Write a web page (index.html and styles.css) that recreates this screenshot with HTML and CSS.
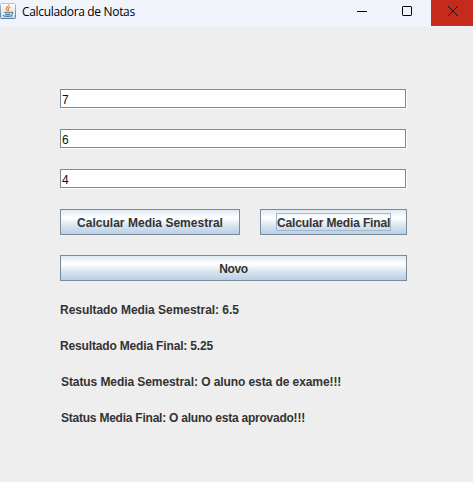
FILE: index.html
```html
<!DOCTYPE html>
<html lang="pt">
<head>
<meta charset="utf-8">
<title>Calculadora de Notas</title>
<link rel="stylesheet" href="styles.css">
</head>
<body>
<header class="titlebar">
  <svg class="app-icon" width="16" height="16" viewBox="0 0 16 16">
    <defs>
      <linearGradient id="tile" x1="0" y1="0" x2="0" y2="1">
        <stop offset="0" stop-color="#fdfdfd"/><stop offset="1" stop-color="#cfdbe4"/>
      </linearGradient>
      <linearGradient id="edge" x1="0" y1="0" x2="0" y2="1">
        <stop offset="0" stop-color="#b3c1cc"/><stop offset="1" stop-color="#567d9c"/>
      </linearGradient>
    </defs>
    <rect x=".5" y=".5" width="15" height="15" rx="1" fill="url(#tile)" stroke="url(#edge)"/>
    <path d="M8.8 1.5C9.6 3.5 5.6 4 6.2 6c.2.9 1.2 1.5 1.4 2.4M10.6 4C8.7 4.8 7.6 5.6 8.4 6.6c.5.6.4 1.2-.1 1.8" fill="none" stroke="#ee8432" stroke-width="1.2"/>
    <path d="M4.5 9.2c1.5.7 5 .6 6.2 0M5.2 11c1.4.6 3.8.6 5 0M3 12.6c2 1.1 7.5 1 9.5-.1M11 9.2c2.4-.6 2.2 1.5.1 2" fill="none" stroke="#4b7fa8" stroke-width="1.1"/>
  </svg>
  <h1 class="title">Calculadora de Notas</h1>
  <div class="controls">
    <svg class="minimize" width="10" height="10" viewBox="0 0 10 10"><path d="M0 5.5h10" stroke="#000"/></svg>
    <svg class="maximize" width="10" height="10" viewBox="0 0 10 10"><rect x=".5" y=".5" width="9" height="9" rx=".6" fill="none" stroke="#000"/></svg>
    <span class="close"><svg width="10" height="10" viewBox="0 0 10 10"><path d="M0 0l10 10M10 0L0 10" stroke="#161616" stroke-width="1"/></svg></span>
  </div>
</header>
<main class="panel">
  <div class="field">7</div>
  <div class="field">6</div>
  <div class="field">4</div>
  <div class="actions">
    <button class="button semester">Calcular Media Semestral</button>
    <button class="button final"><span class="focused">Calcular Media Final</span></button>
  </div>
  <button class="button new">Novo</button>
  <div class="results">
    <p class="result semester-result">Resultado Media Semestral: 6.5</p>
    <p class="result final-result">Resultado Media Final: 5.25</p>
    <p class="result status semester-status">Status Media Semestral: O aluno esta de exame!!!</p>
    <p class="result status final-status">Status Media Final: O aluno esta aprovado!!!</p>
  </div>
</main>
</body>
</html>
```
FILE: styles.css
```css
* { box-sizing: border-box; }
body {
  margin: 0;
  height: 482px;
  overflow: hidden;
  background: #eeeeee;
  font: 12px/14px "Liberation Sans", Arial, sans-serif;
}
.titlebar {
  height: 27px;
  display: flex;
  align-items: flex-start;
  background: #f0f3fa;
}
.app-icon { margin-top: 3px; flex: none; }
.title {
  margin: 4px 0 0 6px;
  font: 12px/16px "Open Sans", "Noto Sans", sans-serif;
  letter-spacing: -0.33px;
  color: #000;
  white-space: nowrap;
}
.controls { display: flex; margin-left: auto; }
.minimize { margin: 6px 35px 0 0; }
.maximize { margin: 6px 19px 0 0; }
.close {
  width: 42px;
  height: 26px;
  padding: 6px 0 0 17px;
  background: #c42b1c;
}
.close svg { display: block; }
.panel {
  display: flex;
  flex-direction: column;
  width: 347px;
  margin: 62px 0 0 60px;
}
.field {
  width: 346px;
  height: 19px;
  margin-bottom: 21px;
  padding: 3px 1px 0;
  border: 1px solid #7a8a99;
  box-shadow: 1px 1px #fff;
  background: #fff;
  color: #111;
}
.actions { display: flex; gap: 20px; margin-bottom: 20px; }
.button {
  height: 26px;
  padding: 2px 0 0;
  border: 1px solid #7a8a99;
  border-radius: 0;
  background: linear-gradient(#dde8f3, #fff 30%, #fff 34%, #dce7f1 62%, #b8cfe5);
  color: #333;
  font: bold 12px/14px "Liberation Sans", Arial, sans-serif;
}
.semester { width: 180px; letter-spacing: 0.02px; }
.final { width: 147px; padding: 0; letter-spacing: -0.14px; }
.new { letter-spacing: -0.4px; }
.focused {
  display: block;
  width: 115px;
  height: 18px;
  margin: 0 auto;
  padding-top: 2px;
  border: 1px solid #a3b8cc;
  white-space: nowrap;
}
.results { margin-top: 22px; }
.result {
  height: 14px;
  margin: 0 0 22px;
  color: #333;
  font-weight: bold;
  white-space: nowrap;
}
.status { padding-left: 1px; }
.semester-result { letter-spacing: -0.04px; }
.final-result { letter-spacing: -0.16px; }
.semester-status { letter-spacing: -0.08px; }
.final-status { letter-spacing: -0.23px; }
```
